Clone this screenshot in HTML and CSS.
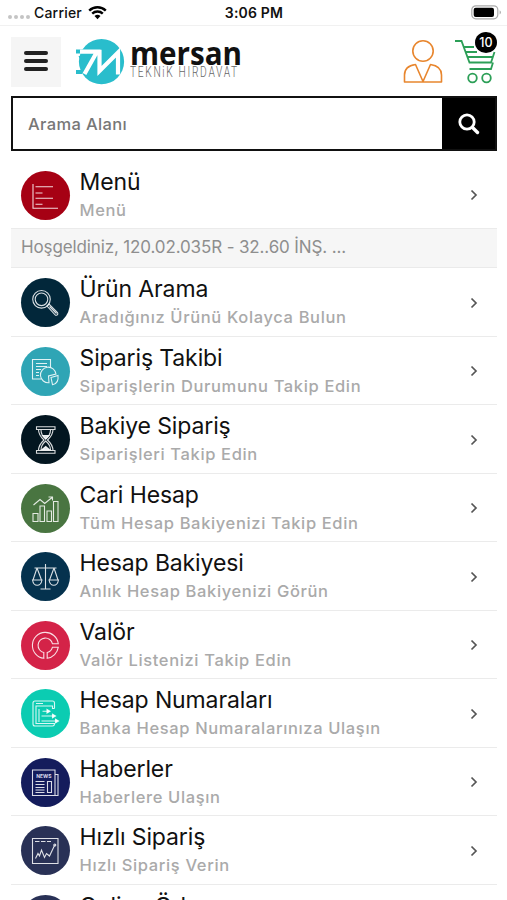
FILE: index.html
```html
<!DOCTYPE html>
<html lang="tr">
<head>
	<meta charset="utf-8">
	<meta name="viewport" content="width=device-width, initial-scale=1">
	<title>Mersan Teknik Hırdavat</title>
	<link rel="stylesheet" href="styles.css">
</head>
<body>
	<div class="status">
		<div class="carrier">
			<span class="dots"><i></i><i></i><i></i><i></i></span>
			<span class="carrier-name">Carrier</span>
			<svg class="wifi" width="19" height="15" viewBox="0 0 19 15"><path d="M1.2 5.6a12 12 0 0 1 16.6 0M4.2 8.7a7.6 7.6 0 0 1 10.6 0" fill="none" stroke="#000" stroke-width="2.4"/><path d="M9.5 14.2l-3-3.1a4.3 4.3 0 0 1 6 0z"/></svg>
		</div>
		<div class="time">3:06 PM</div>
		<svg class="battery" width="31" height="15" viewBox="0 0 31 15"><rect x=".8" y=".8" width="26" height="13" rx="4" fill="#fff" stroke="#aaa" stroke-width="1.2"/><rect x="2.7" y="2.7" width="20.3" height="9.4" rx="2"/><path d="M28.7 5.2q2.2 2 0 4.4z" fill="#999"/></svg>
	</div>

	<header class="header">
		<button class="menu-btn"><span></span><span></span><span></span></button>
		<a class="logo" href="#">
			<svg width="50" height="46" viewBox="0 0 50 46"><circle cx="26.5" cy="22.7" r="22.6" fill="#29bdcc"/><path d="M1 10.5h7v4H1zM3.5 17h7l-4 6zM1 31h6v4H1z" fill="#29bdcc"/><path d="M5 12.7H22L9.5 35M24.5 10.7V32L43 13.5V35.5" fill="none" stroke="#fff" stroke-width="4.2"/></svg>
			<span class="logo-text"><b>mersan</b><small>TEKNiK HIRDAVAT</small></span>
		</a>
		<a class="user" href="#">
			<svg width="40" height="44" viewBox="0 0 40 44" fill="none" stroke="#e8862e" stroke-width="1.6"><circle cx="20" cy="11" r="10.2"/><path d="M1.5 42V35Q1.5 26 12.5 24.5L20 41.5L27.5 24.5Q38.5 26 38.5 35V42z" stroke-linejoin="round"/></svg>
		</a>
		<a class="cart" href="#">
			<svg width="42" height="44" viewBox="0 0 42 44" fill="none" stroke="#2c9f57" stroke-width="1.8"><path d="M0 1H6.5L14.5 22.5H36L39.5 12M8.5 7H19M10.5 12H22M12.5 17H37.5M14.5 29H36L38 22.5"/><circle cx="17.5" cy="38" r="4.3"/><circle cx="31.5" cy="38" r="4.3"/></svg>
			<span class="badge">10</span>
		</a>
	</header>

	<form class="search">
		<label class="search-label">Arama Alanı</label>
		<button class="search-btn" type="button"><svg width="22" height="22" viewBox="0 0 22 22" fill="none" stroke="#fff"><circle cx="9" cy="9" r="7.2" stroke-width="2.8"/><path d="M14.5 14.5l5 5" stroke-width="3.4" stroke-linecap="round"/></svg></button>
	</form>

	<div class="list">
		<a class="row first" href="#">
			<svg class="icon red" viewBox="0 0 49 49"><path d="M12 13V37.3H37M14.5 15.7H32M14.5 22H21.5M14.5 27.3H32M14.5 33.3H21.5"/></svg>
			<span class="text"><span class="title">Menü</span><span class="sub">Menü</span></span>
			<svg class="arrow" viewBox="0 0 8 12"><path d="M1.5 1.5L6 6L1.5 10.5"/></svg>
		</a>
		<div class="welcome">Hoşgeldiniz, 120.02.035R - 32..60 İNŞ. ...</div>
		<a class="row" href="#">
			<svg class="icon navy" viewBox="0 0 49 49"><circle cx="20.5" cy="21.3" r="8.8"/><circle cx="20.5" cy="21.3" r="6.3"/><path d="M26 28l2-2 8.5 8.5q1 2-1 2.8l-1 0zM28.5 28.5l7 7"/></svg>
			<span class="text"><span class="title">Ürün Arama</span><span class="sub">Aradığınız Ürünü Kolayca Bulun</span></span>
			<svg class="arrow" viewBox="0 0 8 12"><path d="M1.5 1.5L6 6L1.5 10.5"/></svg>
		</a>
		<a class="row" href="#">
			<svg class="icon teal" viewBox="0 0 49 49"><path d="M20 32H11.5V12.5H29.5V20M15 16.5H26M15 19.5H26M15 22.5H20M15 25.5H18M15 28.5H18"/><path d="M28 35.7A7.8 7.8 0 1 1 35 27L27.5 29z"/><path d="M30 30.5L37 28.5Q38 36.5 31.500 37.700z"/></svg>
			<span class="text"><span class="title">Sipariş Takibi</span><span class="sub">Siparişlerin Durumunu Takip Edin</span></span>
			<svg class="arrow" viewBox="0 0 8 12"><path d="M1.5 1.5L6 6L1.5 10.5"/></svg>
		</a>
		<a class="row" href="#">
			<svg class="icon black" viewBox="0 0 49 49"><path d="M15.5 11.8H34V14.5H15.5zM15.5 35.5H34V38.2H15.5zM17.5 14.5Q17.5 20 23 25Q17.5 30 17.5 35.5M32 14.5Q32 20 26.5 25Q32 30 32 35.5M20 15Q20 20 24.7 24Q29.5 20 29.5 15M20 35Q20 30 24.7 26Q29.5 30 29.5 35"/><path d="M21.5 20.5H28L24.7 24zM20.5 35l4.2-3.5 4.2 3.5z" fill="#dfe5e8"/></svg>
			<span class="text"><span class="title">Bakiye Sipariş</span><span class="sub">Siparişleri Takip Edin</span></span>
			<svg class="arrow" viewBox="0 0 8 12"><path d="M1.5 1.5L6 6L1.5 10.5"/></svg>
		</a>
		<a class="row" href="#">
			<svg class="icon green" viewBox="0 0 49 49"><path d="M12 29.5H17V37.5H12zM19 22H23.5V37.5H19zM26 27H30.5V37.5H26zM32.5 17.5H37V37.5H32.5zM12.5 21L19 15.5L23.7 19.5L31 13.5M27.5 13H31.5V16.5"/></svg>
			<span class="text"><span class="title">Cari Hesap</span><span class="sub">Tüm Hesap Bakiyenizi Takip Edin</span></span>
			<svg class="arrow" viewBox="0 0 8 12"><path d="M1.5 1.5L6 6L1.5 10.5"/></svg>
		</a>
		<a class="row" href="#">
			<svg class="icon blue" viewBox="0 0 49 49"><path d="M24.5 12V36.5M19.5 37H29.5M13.5 16H35.5M16 16L12 28M16 16L20.5 28M33 16L28.5 28M33 16L37 28M11.5 28H21Q20 33.3 16.2 33.3T11.5 28zM28 28H37.5Q36.5 33.3 32.8 33.3T28 28z"/></svg>
			<span class="text"><span class="title">Hesap Bakiyesi</span><span class="sub">Anlık Hesap Bakiyenizi Görün</span></span>
			<svg class="arrow" viewBox="0 0 8 12"><path d="M1.5 1.5L6 6L1.5 10.5"/></svg>
		</a>
		<a class="row" href="#">
			<svg class="icon crimson" viewBox="0 0 49 49"><path d="M37.3 22.8A13 13 0 1 0 22.8 37.3V31.5A7.3 7.3 0 1 1 31.5 22.8zM37.3 26.200A13 13 0 0 1 26.200 37.300V31.500A7.300 7.300 0 0 0 31.500 26.200z"/></svg>
			<span class="text"><span class="title">Valör</span><span class="sub">Valör Listenizi Takip Edin</span></span>
			<svg class="arrow" viewBox="0 0 8 12"><path d="M1.5 1.5L6 6L1.5 10.5"/></svg>
		</a>
		<a class="row" href="#">
			<svg class="icon mint" viewBox="0 0 49 49"><path d="M33.5 19.5V14Q33.5 12 31.5 12H14Q12 12 12 14V35Q12 37 14 37H31.5Q33.5 37 33.5 34.5H15V17H31.5V19.5H33.5M15 14.5H22M18 20V33"/><path d="M21.5 22.3H27M20.5 27H33M20.5 32H36"/><path d="M26 20.5l3 1.8-3 1.8zM31.5 25.2l3 1.8-3 1.8zM34.5 30.2l3 1.8-3 1.8z" fill="#fff"/></svg>
			<span class="text"><span class="title">Hesap Numaraları</span><span class="sub">Banka Hesap Numaralarınıza Ulaşın</span></span>
			<svg class="arrow" viewBox="0 0 8 12"><path d="M1.5 1.5L6 6L1.5 10.5"/></svg>
		</a>
		<a class="row" href="#">
			<svg class="icon indigo" viewBox="0 0 49 49"><path d="M11.5 12H34V37.5H11.5zM34 16.5H37V37.5H34M14.5 23.5H23.5M14.5 26.5H23.5M14.5 29.5H23.5M14.5 32H23.5M14.5 34.5H23.5M26.5 23.5H30.5V34.5H26.5z"/><text x="22.8" y="19.5">NEWS</text></svg>
			<span class="text"><span class="title">Haberler</span><span class="sub">Haberlere Ulaşın</span></span>
			<svg class="arrow" viewBox="0 0 8 12"><path d="M1.5 1.5L6 6L1.5 10.5"/></svg>
		</a>
		<a class="row" href="#">
			<svg class="icon slate" viewBox="0 0 49 49"><path d="M11.5 12.5H37V37.5H11.5zM14 15.5H18.5M20 15.5H24.5M26 15.5H30M14.5 32.5L17 27.5L18.5 30L20.5 24L23.5 31.5L25.5 27.5L28.5 30L33.5 19.5"/><circle cx="33.8" cy="19" r="1"/></svg>
			<span class="text"><span class="title">Hızlı Sipariş</span><span class="sub">Hızlı Sipariş Verin</span></span>
			<svg class="arrow" viewBox="0 0 8 12"><path d="M1.5 1.5L6 6L1.5 10.5"/></svg>
		</a>
		<a class="row" href="#">
			<svg class="icon slate" viewBox="0 0 49 49"><path d="M11.5 15.5H37.5V33.5H11.5zM11.5 21H37.5"/></svg>
			<span class="text"><span class="title">Online Ödeme</span></span>
			<svg class="arrow" viewBox="0 0 8 12"><path d="M1.5 1.5L6 6L1.5 10.5"/></svg>
		</a>
	</div>
</body>
</html>
```
FILE: styles.css
```css
*{
	box-sizing: border-box;
}
body{
	margin: 0;
	height: 900px;
	overflow: hidden;
	background: #fff;
	color: #111;
	font-family: Inter, "Liberation Sans", sans-serif;
}
a{
	color: inherit;
	text-decoration: none;
}
svg{
	display: block;
}
.status{
	display: grid;
	grid-template-columns: 1fr auto 1fr;
	align-items: center;
	height: 26px;
	padding: 0 5px 0 8px;
	border-bottom: 1px solid #f1f1f1;
	font-size: 14px;
	font-weight: 500;
}
.carrier{
	display: flex;
	align-items: center;
}
.dots{
	display: flex;
	gap: 2px;
	padding-top: 8px;
}
.dots i{
	width: 4px;
	height: 4px;
	border-radius: 50%;
	background: #c4c4c4;
}
.carrier-name{
	margin: 0 6px 0 4px;
	letter-spacing: .2px;
}
.time{
	padding-right: 2px;
	font-weight: 600;
	letter-spacing: .2px;
}
.battery{
	justify-self: end;
}
.header{
	display: flex;
	align-items: flex-start;
	height: 70px;
	padding: 11px 10px 0 11px;
}
.menu-btn{
	display: flex;
	flex-direction: column;
	justify-content: center;
	align-items: center;
	gap: 4px;
	width: 50px;
	height: 50px;
	padding: 0 0 2px;
	border: 0;
	background: #f5f5f5;
}
.menu-btn span{
	width: 24px;
	height: 4px;
	border-radius: 2px;
	background: #222;
}
.logo{
	display: flex;
	margin: 2px auto 0 14px;
}
.logo-text{
	display: flex;
	flex-direction: column;
	width: 110px;
	margin-left: 5px;
}
.logo-text b{
	font: bold 32px/28px "Open Sans", sans-serif;
	transform: scaleX(.925);
	transform-origin: left;
}
.logo-text small{
	font: 300 14px/11px Roboto, sans-serif;
	color: #666;
	letter-spacing: 2.3px;
	white-space: nowrap;
	transform: scaleX(.73);
	transform-origin: left;
}
.user{
	margin: 3px 12px 0 0;
}
.cart{
	position: relative;
	margin-top: 3px;
}
.badge{
	position: absolute;
	top: -8px;
	right: 0;
	width: 22px;
	height: 21px;
	border-radius: 50%;
	background: #000;
	color: #fff;
	font-size: 12.5px;
	font-weight: 500;
	line-height: 21px;
	text-align: center;
}
.search{
	display: flex;
	height: 55px;
	margin: 0 10px 0 11px;
	border: 2px solid #111;
}
.search-label{
	flex: 1;
	padding-left: 15px;
	color: #777;
	font-size: 16.5px;
	font-weight: 500;
	line-height: 52px;
	letter-spacing: .35px;
}
.search-btn{
	display: flex;
	align-items: center;
	justify-content: center;
	width: 53px;
	padding: 0;
	border: 0;
	background: #000;
}
.list{
	margin: 9.8px 10px 0 11px;
}
.row{
	display: flex;
	align-items: center;
	height: 68.5px;
	padding: 1.5px 19px 0 9.5px;
	border-bottom: 1px solid #ebebeb;
}
.first{
	height: 68px;
}
.welcome{
	height: 39.3px;
	padding-left: 10px;
	border-bottom: 1px solid #eaeaea;
	background: #f6f6f6;
	color: #8e8e8e;
	font-size: 17px;
	line-height: 37px;
	letter-spacing: -.13px;
}
.icon{
	width: 49px;
	height: 49px;
	border-radius: 50%;
	fill: none;
	stroke: #fff;
	stroke-opacity: .85;
	stroke-width: 1.1;
}
.icon text{
	fill: #dde;
	stroke: none;
	font-size: 5px;
	font-weight: 700;
	text-anchor: middle;
}
.red{
	background: #a60114;
}
.navy{
	background: #02273a;
}
.teal{
	background: #2fa5b5;
}
.black{
	background: #031620;
}
.green{
	background: #497541;
}
.blue{
	background: #05324e;
}
.crimson{
	background: #d42348;
}
.mint{
	background: #0bccb2;
}
.indigo{
	background: #141c5c;
}
.slate{
	background: #293156;
}
.text{
	display: flex;
	flex: 1;
	flex-direction: column;
	height: 55px;
	padding-left: 10px;
}
.title{
	font-size: 23px;
	line-height: 29px;
	letter-spacing: -.12px;
}
.sub{
	color: #aaa;
	font-size: 16.5px;
	font-weight: 500;
	line-height: 26px;
	letter-spacing: .64px;
}
.arrow{
	width: 8px;
	height: 12px;
	fill: none;
	stroke: #555;
	stroke-width: 1.7;
}
```
